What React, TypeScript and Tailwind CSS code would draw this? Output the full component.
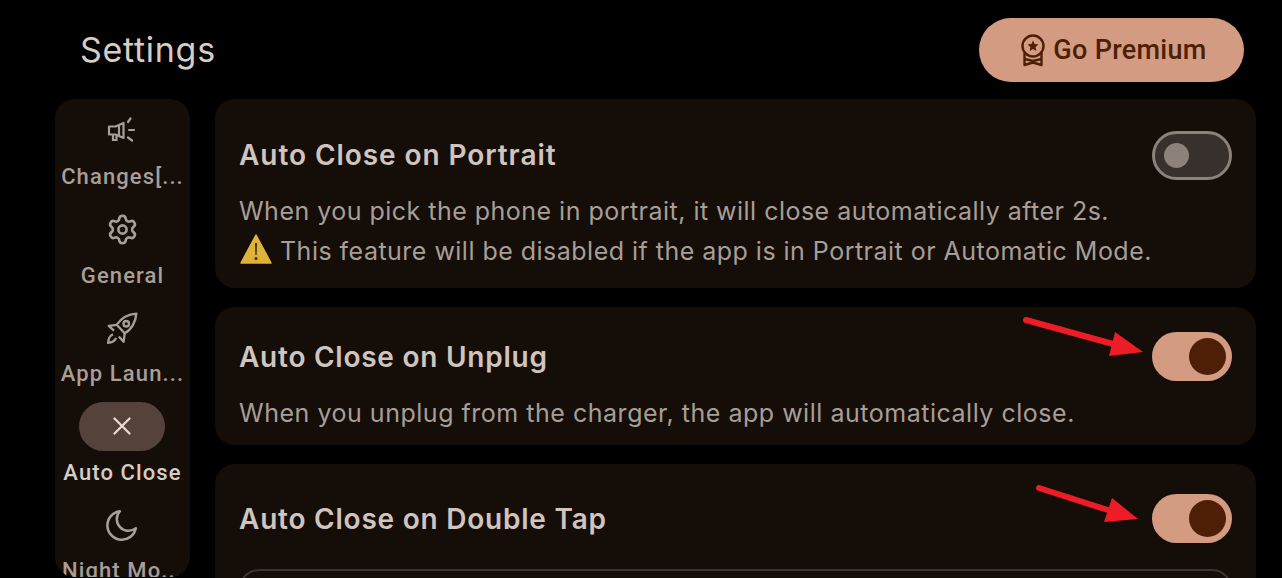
import React from 'react';
import { Settings, X } from 'lucide-react';

function MegaphoneIcon() {
  return (
    <svg width="32" height="32" viewBox="0 0 32 32" fill="none" stroke="#a89e98" strokeWidth="2.2">
      <path d="M3 11.5h6.5l8-3.5v15l-8-3.5H3z" strokeLinejoin="round" />
      <path d="M7 20v5h3.5v-4.5" />
      <path d="M13 10v11" />
      <path d="M22 7l2.5-3.5M23 15h5M22 22.5l4 3" strokeLinecap="round" />
    </svg>
  );
}

function RocketIcon() {
  return (
    <svg width="34" height="34" viewBox="0 0 32 32" fill="none" stroke="#a89e98" strokeWidth="2.2" strokeLinejoin="round">
      <path d="M29.5 2.5C22 3 15 7 11 13l7.5 8C25 17.5 29 10 29.5 2.5z" />
      <path d="M11 13l-7.5 1 5 4.5" />
      <path d="M18.5 21l-1 8-4.5-5" />
      <path d="M7.5 22C4.5 23 3 27 3 30c3 0 6-1.5 7.5-4.5" />
      <circle cx="20" cy="12" r="2.6" />
    </svg>
  );
}

function MoonIcon() {
  return (
    <svg width="34" height="34" viewBox="0 0 32 32" fill="none" stroke="#a89e98" strokeWidth="2.4" strokeLinejoin="round">
      <path d="M14 3A13.5 13.5 0 1 0 29 19A11 11 0 0 1 14 3z" />
    </svg>
  );
}

function AwardIcon() {
  return (
    <svg width="26" height="33" viewBox="0 0 26 33" fill="none" stroke="#4e1f06" strokeWidth="2.4">
      <circle cx="13" cy="12" r="10.5" />
      <path d="M13 6.5l1.6 3.6 3.9.4-2.9 2.6.8 3.8-3.4-2-3.4 2 .8-3.8-2.9-2.6 3.9-.4z" fill="#4e1f06" stroke="none" />
      <path d="M4.5 19v12l8.5-2.5 8.5 2.5V19" strokeLinejoin="round" />
      <path d="M4.5 25l8.5 2 8.5-2" />
    </svg>
  );
}

function WarningIcon() {
  return (
    <svg width="32" height="32" viewBox="0 0 32 32" className="inline-block align-[-5px] ml-[1px] mr-[8px]">
      <path d="M16 2L31 30H1z" fill="#dfb23a" stroke="#dfb23a" strokeWidth="1.5" strokeLinejoin="round" />
      <path d="M15 10h2l-.4 12h-1.2z" fill="#3a2c12" />
      <circle cx="16" cy="25.5" r="1.5" fill="#3a2c12" />
    </svg>
  );
}

function Toggle({ on }: { on: boolean }) {
  if (on) {
    return (
      <div className="w-[80px] h-[49px] rounded-full bg-[#d39c82] flex items-center justify-end pr-[6px] shrink-0">
        <div className="w-[37px] h-[37px] rounded-full bg-[#4e1f06]" />
      </div>
    );
  }
  return (
    <div className="w-[80px] h-[49px] rounded-full bg-[#38302c] border-[3px] border-[#8c817b] flex items-center pl-[9px] shrink-0">
      <div className="w-[25px] h-[25px] rounded-full bg-[#8c817b]" />
    </div>
  );
}

const tabs = [
  { label: 'Changes[...', icon: <MegaphoneIcon /> },
  { label: 'General', icon: <Settings size={33} strokeWidth={1.9} /> },
  { label: 'App Laun...', icon: <RocketIcon /> },
  { label: 'Auto Close', icon: <X size={30} strokeWidth={1.9} />, active: true },
  { label: 'Night Mo...', icon: <MoonIcon /> },
];

export default function App() {
  return (
    <div className="relative w-[1282px] h-[578px] overflow-hidden bg-black font-['Roboto',sans-serif]">
      <div className="h-[99px] flex items-start justify-between pl-[80px] pr-[38px] pt-[18px]">
        <h1 className="font-['Inter',sans-serif] text-[34px] leading-[64px] text-[#d8ccc6] tracking-[0.7px]">Settings</h1>
        <button className="w-[265px] h-[64px] rounded-full bg-[#d39c82] text-[#4e1f06] flex items-center justify-center gap-[7px] pl-[4px] text-[27px] font-medium tracking-[0.3px]">
          <AwardIcon />
          Go Premium
        </button>
      </div>

      <div className="flex pl-[55px] pr-[26px] gap-[25px]">
        <nav className="w-[135px] h-[478px] rounded-[20px] bg-[#150d07] pt-[7px] overflow-hidden shrink-0">
          {tabs.map((tab) => (
            <div key={tab.label} className="h-[98.5px] flex flex-col items-center">
              <div className={`w-[86px] h-[49px] mr-[1px] rounded-full flex items-center justify-center ${tab.active ? 'bg-[#55423a] text-[#e8d8d0]' : 'text-[#a89e98]'}`}>
                {tab.icon}
              </div>
              <div className={`mt-[8px] text-[22px] leading-[28px] font-medium tracking-[1.1px] whitespace-nowrap ${tab.active ? 'text-[#d8ccc6]' : 'text-[#a89e98]'}`}>
                {tab.label}
              </div>
            </div>
          ))}
        </nav>

        <div className="flex-1 flex flex-col font-['Inter',sans-serif]">
          <section className="h-[189px] rounded-[20px] bg-[#150d07] pl-[24px] pr-[24px] pt-[32px]">
            <div className="flex items-center justify-between">
              <h2 className="pb-[2px] text-[28px] leading-[46px] font-semibold tracking-[0.93px] text-[#d0c4be]">Auto Close on Portrait</h2>
              <Toggle on={false} />
            </div>
            <p className="mt-[11px] text-[25px] leading-[40px] tracking-[0.48px] text-[#a89e98]">
              When you pick the phone in portrait, it will close automatically after 2s.
              <br />
              <WarningIcon />
              This feature will be disabled if the app is in Portrait or Automatic Mode.
            </p>
          </section>

          <section className="mt-[19px] h-[138px] rounded-[20px] bg-[#150d07] pl-[24px] pr-[24px] pt-[25px]">
            <div className="flex items-center justify-between">
              <h2 className="pt-[2px] text-[28px] leading-[47px] font-semibold tracking-[0.75px] text-[#d0c4be]">Auto Close on Unplug</h2>
              <Toggle on />
            </div>
            <p className="mt-[12px] text-[25px] leading-[40px] tracking-[0.52px] text-[#a89e98]">
              When you unplug from the charger, the app will automatically close.
            </p>
          </section>

          <section className="mt-[19px] h-[140px] rounded-[20px] bg-[#150d07] pl-[24px] pr-[24px] pt-[30px]">
            <div className="flex items-center justify-between">
              <h2 className="pt-[2px] text-[28px] leading-[47px] font-semibold tracking-[0.77px] text-[#d0c4be]">Auto Close on Double Tap</h2>
              <Toggle on />
            </div>
            <div className="mt-[26px] h-[40px] rounded-[20px] border-2 border-[#3c3430]" />
          </section>
        </div>
      </div>

      {/* red annotation arrows over the screenshot */}
      <svg width="1282" height="578" className="absolute inset-0 pointer-events-none" fill="#ee1c25">
        <path d="M1026 320L1113 344" stroke="#ee1c25" strokeWidth="6" strokeLinecap="round" />
        <path d="M1143 352L1115 332L1109 356z" />
        <path d="M1039 488L1108 510" stroke="#ee1c25" strokeWidth="6" strokeLinecap="round" />
        <path d="M1138 519L1112 498L1104 522z" />
      </svg>
    </div>
  );
}
